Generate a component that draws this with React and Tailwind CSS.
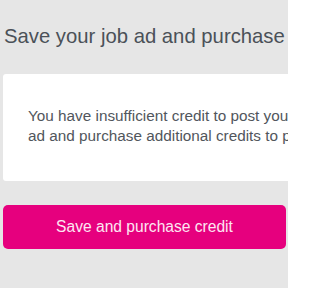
export default function App() {
  return (
    <div
      className="w-[288px] h-[288px] overflow-hidden bg-[#e6e6e6] pl-[3px]"
      style={{ fontFamily: '"Liberation Sans", Arial, sans-serif' }}
    >
      <h1 className="pt-[25px] pl-[1px] text-[20.3px] leading-[23px] text-[#4b5158] whitespace-nowrap">
        Save your job ad and purchase credit
      </h1>
      <div className="mt-[26px] w-[420px] bg-white rounded-[3px] pt-[32px] pb-[35px] pl-[25px] text-[15.3px] leading-[20px] text-[#51565c] whitespace-nowrap">
        <p>You have insufficient credit to post your job ad. Save your job</p>
        <p>ad and purchase additional credits to post it.</p>
      </div>
      <button className="mt-[24px] w-[283px] h-[44px] rounded-[5px] bg-[#e6007e] text-[#fde6f2] text-[15.6px] flex items-center justify-center">
        Save and purchase credit
      </button>
    </div>
  );
}
